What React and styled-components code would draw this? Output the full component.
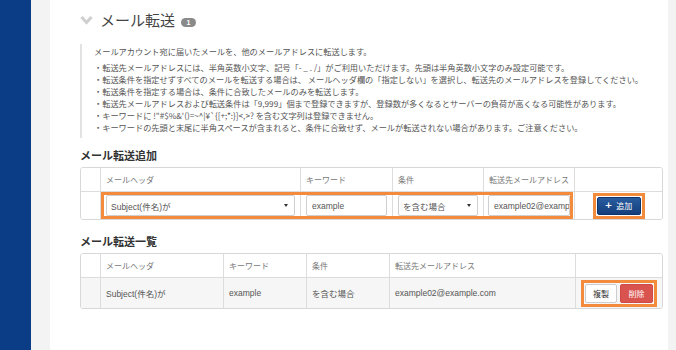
import styled, { createGlobalStyle } from 'styled-components';

const GlobalStyle = createGlobalStyle`
  html, body {
    margin: 0;
    padding: 0;
    background: #ffffff;
  }
  body {
    font-family: 'Liberation Sans', 'Noto Sans CJK JP', sans-serif;
    color: #444;
  }
`;

const Page = styled.div`
  display: flex;
  flex-direction: row;
  width: 676px;
  height: 350px;
  overflow: hidden;
`;

const Sidebar = styled.div`
  width: 31px;
  flex-shrink: 0;
  background: #0b3c86;
`;

const Gutter = styled.div`
  width: ${(p) => p.$width}px;
  flex-shrink: 0;
  background: #f3f3f3;
`;

const Main = styled.div`
  flex: 1;
  background: #ffffff;
  padding: 5px 5px 0 30px;
  display: flex;
  flex-direction: column;
`;

const SectionHead = styled.div`
  display: flex;
  flex-direction: row;
  align-items: center;
  height: 28px;
  flex-shrink: 0;
  margin-top: ${(p) => p.$top || 0}px;
`;

const Chevron = styled.svg`
  width: 13px;
  height: 10px;
  margin-right: 7px;
  margin-top: 1px;
`;

const SectionTitle = styled.h2`
  margin: 0;
  font-family: 'Noto Sans CJK JP', sans-serif;
  font-size: 15px;
  font-weight: 400;
  color: #444;
`;

const Badge = styled.span`
  display: inline-flex;
  align-items: center;
  justify-content: center;
  width: 15px;
  height: 9px;
  margin-left: 6px;
  margin-top: 6px;
  border-radius: 5px;
  background: #8a8a8a;
  color: #fff;
  font-size: 7px;
  font-weight: 700;
  line-height: 1;
`;

const Description = styled.div`
  margin-top: 11px;
  border-left: 2px solid #e2e2e2;
  padding: 1px 0 5px 12px;
  font-family: 'Noto Sans CJK JP', sans-serif;
  font-size: 8.2px;
  line-height: 12px;
  color: #555;
`;

const Lead = styled.p`
  margin: 0 0 4px;
`;

const Notes = styled.ul`
  margin: 0;
  padding: 0;
  list-style: none;
`;

const Note = styled.li`
  white-space: nowrap;
`;

const SubTitle = styled.h3`
  margin: ${(p) => p.$top}px 0 5px;
  font-family: 'Noto Sans CJK JP', sans-serif;
  font-size: 11px;
  font-weight: 700;
  line-height: 14px;
  color: #333;
`;

const Table = styled.div`
  display: grid;
  grid-template-columns: ${(p) => p.$cols};
  grid-template-rows: 24px ${(p) => p.$rowHeight}px;
  width: 581px;
  flex-shrink: 0;
  border: 1px solid #d8d8d8;
  border-radius: 3px;
  overflow: hidden;
`;

const HeadCell = styled.div`
  display: flex;
  align-items: center;
  padding: 0 5px;
  border-right: ${(p) => (p.$last ? 'none' : '1px solid #dcdcdc')};
  border-bottom: 1px solid #dcdcdc;
  font-family: 'Noto Sans CJK JP', sans-serif;
  font-size: 8px;
  color: #777;
  background: #fff;
`;

const BodyCell = styled.div`
  display: flex;
  align-items: center;
  justify-content: ${(p) => (p.$center ? 'center' : 'flex-start')};
  grid-row: 2;
  grid-column: ${(p) => p.$col};
  padding: 0 ${(p) => (p.$pad != null ? p.$pad : 5)}px;
  border-right: ${(p) => (p.$col === 6 ? 'none' : '1px solid #dcdcdc')};
  font-family: ${(p) =>
    p.$jp ? "'Noto Sans CJK JP', sans-serif" : "'Liberation Sans', 'Noto Sans CJK JP', sans-serif"};
  font-size: 8.5px;
  color: #555;
  background: ${(p) => (p.$shaded ? '#f6f6f6' : '#fff')};
  min-width: 0;
`;

const Highlight = styled.div`
  grid-row: 2;
  grid-column: 2 / 6;
  margin-right: 2px;
  border: 3px solid #f28b3c;
  pointer-events: none;
  z-index: 2;
`;

const SelectBox = styled.div`
  flex: 1;
  display: flex;
  align-items: center;
  justify-content: space-between;
  height: 19px;
  padding: 0 6px 0 4px;
  border: 1px solid #cfcfcf;
  border-radius: 2px;
  background: #fff;
  font-size: 8.5px;
  color: #555;
  white-space: nowrap;
`;

const Caret = styled.span`
  width: 0;
  height: 0;
  border-left: 2.5px solid transparent;
  border-right: 2.5px solid transparent;
  border-top: 3.5px solid #333;
`;

const TextInput = styled.div`
  flex: 1;
  min-width: 0;
  display: flex;
  align-items: center;
  height: 19px;
  padding: 0 5px;
  border: 1px solid #cfcfcf;
  border-radius: 2px;
  background: #fff;
  font-size: 8.5px;
  color: #555;
  white-space: nowrap;
  overflow: hidden;
`;

const Marked = styled.div`
  display: flex;
  flex-direction: row;
  gap: 3px;
  padding: 1px;
  border: 3px solid #f28b3c;
`;

const Button = styled.button`
  display: inline-flex;
  align-items: center;
  justify-content: center;
  gap: 4px;
  height: ${(p) => p.$h || 19}px;
  width: ${(p) => p.$w}px;
  padding: 0;
  border-radius: 2px;
  font-family: 'Noto Sans CJK JP', sans-serif;
  font-size: 8px;
  white-space: nowrap;
  cursor: pointer;
  color: ${(p) => (p.$variant === 'default' ? '#333' : '#fff')};
  background: ${(p) =>
    p.$variant === 'primary'
      ? 'linear-gradient(#285c9f, #153f7c)'
      : p.$variant === 'danger'
      ? '#d9534f'
      : '#fff'};
  border: 1px solid
    ${(p) =>
      p.$variant === 'primary'
        ? '#0f346c'
        : p.$variant === 'danger'
        ? '#cf4a46'
        : '#cccccc'};
`;

const Plus = styled.span`
  font-family: 'DejaVu Sans', sans-serif;
  font-weight: 700;
  font-size: 9px;
  line-height: 1;
`;

const ChevronIcon = () => (
  <Chevron viewBox="0 0 13 10">
    <path d="M1.5 2 L6.5 7.5 L11.5 2" fill="none" stroke="#cfcfcf" strokeWidth="3" />
  </Chevron>
);

const notes = [
  '・転送先メールアドレスには、半角英数小文字、記号「- _ . /」がご利用いただけます。先頭は半角英数小文字のみ設定可能です。',
  '・転送条件を指定せずすべてのメールを転送する場合は、 メールヘッダ欄の「指定しない」を選択し、転送先のメールアドレスを登録してください。',
  '・転送条件を指定する場合は、条件に合致したメールのみを転送します。',
  '・転送先メールアドレスおよび転送条件は「9,999」個まで登録できますが、登録数が多くなるとサーバーの負荷が高くなる可能性があります。',
  '・キーワードに !"#$%&\'()=~^|¥`{[+;*:}]<,>? を含む文字列は登録できません。',
  '・キーワードの先頭と末尾に半角スペースが含まれると、条件に合致せず、メールが転送されない場合があります。ご注意ください。',
];

const forwards = [
  {
    header: 'Subject(件名)が',
    keyword: 'example',
    condition: 'を含む場合',
    to: 'example02@example.com',
  },
];

const App = () => {
  return (
    <>
      <GlobalStyle />
      <Page>
        <Sidebar />
        <Gutter $width={19} />
        <Main>
          <SectionHead>
            <ChevronIcon />
            <SectionTitle>メール転送</SectionTitle>
            <Badge>1</Badge>
          </SectionHead>

          <Description>
            <Lead>メールアカウント宛に届いたメールを、他のメールアドレスに転送します。</Lead>
            <Notes>
              {notes.map((n, i) => (
                <Note key={i}>{n}</Note>
              ))}
            </Notes>
          </Description>

          <SubTitle $top={10}>メール転送追加</SubTitle>
          <Table $cols="20px 200px 92px 91px 91px 1fr" $rowHeight={27}>
            <HeadCell />
            <HeadCell>メールヘッダ</HeadCell>
            <HeadCell>キーワード</HeadCell>
            <HeadCell>条件</HeadCell>
            <HeadCell>転送先メールアドレス</HeadCell>
            <HeadCell $last />

            <BodyCell $col={1} />
            <BodyCell $col={2}>
              <SelectBox>
                <span>Subject(件名)が</span>
                <Caret />
              </SelectBox>
            </BodyCell>
            <BodyCell $col={3}>
              <TextInput>example</TextInput>
            </BodyCell>
            <BodyCell $col={4} $jp>
              <SelectBox>
                <span>を含む場合</span>
                <Caret />
              </SelectBox>
            </BodyCell>
            <BodyCell $col={5} $pad={4}>
              <TextInput>example02@example.com</TextInput>
            </BodyCell>
            <BodyCell $col={6} $center>
              <Marked>
                <Button $variant="primary" $w={44} $h={18}>
                  <Plus>+</Plus>
                  追加
                </Button>
              </Marked>
            </BodyCell>
            <Highlight />
          </Table>

          <SubTitle $top={14}>メール転送一覧</SubTitle>
          <Table $cols="20px 123px 83px 83px 186px 1fr" $rowHeight={30}>
            <HeadCell />
            <HeadCell>メールヘッダ</HeadCell>
            <HeadCell>キーワード</HeadCell>
            <HeadCell>条件</HeadCell>
            <HeadCell>転送先メールアドレス</HeadCell>
            <HeadCell $last />

            {forwards.map((f) => [
              <BodyCell key="c1" $col={1} $shaded />,
              <BodyCell key="c2" $col={2} $shaded>
                {f.header}
              </BodyCell>,
              <BodyCell key="c3" $col={3} $shaded>
                {f.keyword}
              </BodyCell>,
              <BodyCell key="c4" $col={4} $shaded $jp>
                {f.condition}
              </BodyCell>,
              <BodyCell key="c5" $col={5} $shaded>
                {f.to}
              </BodyCell>,
              <BodyCell key="c6" $col={6} $shaded $center>
                <Marked>
                  <Button $variant="default" $w={32}>
                    複製
                  </Button>
                  <Button $variant="danger" $w={33}>
                    削除
                  </Button>
                </Marked>
              </BodyCell>,
            ])}
          </Table>

          <SectionHead $top={41}>
            <ChevronIcon />
            <SectionTitle>メール振り分け</SectionTitle>
          </SectionHead>
        </Main>
        <Gutter $width={10} />
      </Page>
    </>
  );
};

export default App;
